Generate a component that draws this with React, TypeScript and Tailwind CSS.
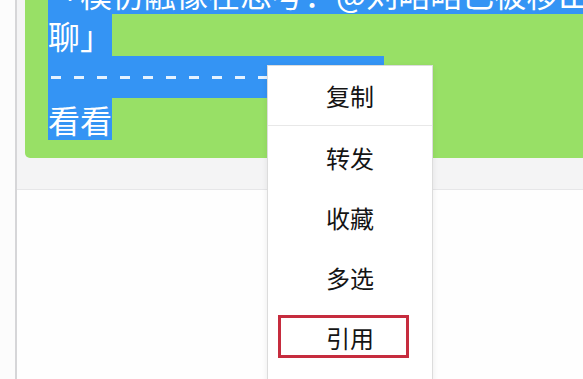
const menuItems = ["复制", "转发", "收藏", "多选", "引用"];

function Selected({ children, className = "" }: { children: React.ReactNode; className?: string }) {
  return <span className={`inline-block h-[42px] bg-[#3494f4] align-top ${className}`}>{children}</span>;
}

export default function App() {
  const dashes = Array.from({ length: 15 });

  return (
    <div
      className="relative flex h-[379px] w-[583px] overflow-hidden bg-white"
      style={{ fontFamily: '"Noto Sans CJK SC", "Noto Sans", sans-serif' }}
    >
      <div className="w-[17px] shrink-0 border-r-2 border-[#d6d6d8] bg-[#fcfcfc]" />

      <div className="flex min-w-0 flex-1 flex-col">
        <div className="h-[190px] shrink-0 border-b border-[#e6e6e8] bg-[#f4f4f5] pl-[8px]">
          <div className="h-[158px] overflow-hidden rounded-bl-[5px] bg-[#98e066] pl-[23px]">
            <div className="-mt-[28px] text-[32px] leading-[42px] text-white">
              <div className="whitespace-nowrap">
                <Selected className="pr-[200px]">「模仿融像在思考：@刘略略已被移出群</Selected>
              </div>
              <div>
                <Selected>聊」</Selected>
              </div>
              <div>
                <Selected className="w-[336px]">
                  <span className="flex h-full items-center gap-[13px] pl-[3px]">
                    {dashes.map((_, i) => (
                      <span key={i} className="h-[3px] w-[10px] shrink-0 bg-[#e4f2ff]" />
                    ))}
                  </span>
                </Selected>
              </div>
              <div>
                <Selected>看看</Selected>
              </div>
            </div>
          </div>
        </div>
        <div className="flex-1 bg-[#fefefe]" />
      </div>

      {/* context menu */}
      <div className="absolute left-[267px] top-[65px] w-[166px] border border-[#dcdcdc] bg-white shadow-[0_2px_6px_rgba(0,0,0,0.08)]">
        {menuItems.map((label, i) => (
          <div
            key={label}
            className={`relative flex h-[60px] items-center justify-center text-[24px] text-[#141414] ${
              i === 0 ? "border-b border-[#e8e8e8]" : ""
            } ${i > 0 ? "pt-[3px]" : ""}`}
          >
            {label}
            {label === "引用" ? (
              <div className="absolute left-[10px] top-[9px] h-[43px] w-[131px] border-[3px] border-[#c62c3e]" />
            ) : null}
          </div>
        ))}
        <div className="h-[40px]" />
      </div>
    </div>
  );
}
